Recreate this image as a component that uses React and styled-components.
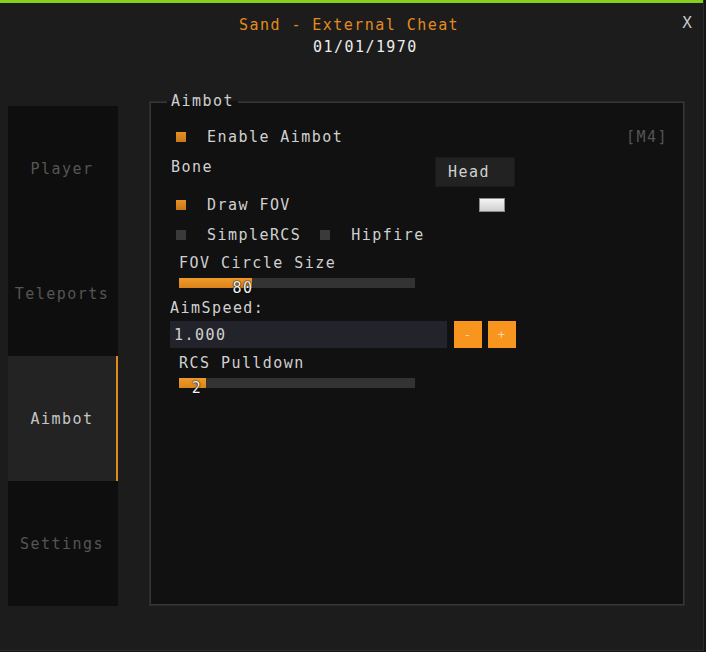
import React from 'react';
import styled, { createGlobalStyle } from 'styled-components';

const GlobalStyle = createGlobalStyle`
  html, body {
    margin: 0;
    padding: 0;
    background: #141414;
  }
  body {
    font-family: 'DejaVu Sans Mono', 'Liberation Mono', monospace;
  }
`;

const Window = styled.div`
  width: 703px;
  height: 650px;
  background: #1c1c1c;
  border-right: 1px solid #2c2c2c;
  border-bottom: 1px solid #2c2c2c;
  display: flex;
  flex-direction: column;
  font-size: 15px;
  letter-spacing: 1.45px;
  color: #d0d0d0;
`;

const TopLine = styled.div`
  height: 3px;
  background: #84d01c;
`;

const Header = styled.div`
  height: 98px;
  display: flex;
  position: relative;
`;

const Titles = styled.div`
  display: flex;
  flex-direction: column;
  padding-top: 11px;
`;

const Title = styled.div`
  color: ${(p) => p.color};
  margin-left: ${(p) => p.left}px;
  line-height: 22px;
  white-space: nowrap;
`;

const Close = styled.div`
  position: absolute;
  right: 11px;
  top: 9px;
  color: #c8c8c8;
  font-size: 16px;
  letter-spacing: 0;
  line-height: 22px;
`;

const Body = styled.div`
  display: flex;
  padding-left: 8px;
  gap: 31px;
  flex: 1;
`;

const Sidebar = styled.div`
  width: 110px;
  height: 500px;
  margin-top: 5px;
  background: #0e0e0e;
  display: flex;
  flex-direction: column;
`;

const Tab = styled.div`
  height: 125px;
  display: flex;
  align-items: center;
  justify-content: center;
  box-sizing: border-box;
  background: ${(p) => (p.active ? '#232323' : 'transparent')};
  border-right: 2px solid ${(p) => (p.active ? '#e08a1c' : 'transparent')};
  color: ${(p) => (p.active ? '#c6c6c6' : '#555555')};
`;

const Panel = styled.div`
  position: relative;
  width: 536px;
  height: 505px;
  background: #111111;
  border: 1px solid #2a2a2a;
  box-shadow: inset 0 0 0 1px #363636;
  display: flex;
  flex-direction: column;
  padding-top: 25px;
  box-sizing: border-box;
`;

const Legend = styled.div`
  position: absolute;
  top: -11px;
  left: 17px;
  padding: 0 4px;
  line-height: 20px;
  color: #cfcfcf;
  background: linear-gradient(to bottom, #1c1c1c 50%, #111111 50%);
`;

const Row = styled.div`
  display: flex;
  align-items: ${(p) => p.align || 'center'};
  height: ${(p) => p.h}px;
  margin-top: ${(p) => p.mt || 0}px;
  padding-left: ${(p) => p.pl || 0}px;
  position: relative;
`;

const Check = styled.div`
  width: 10px;
  height: 10px;
  background: ${(p) => (p.on ? 'linear-gradient(#e69124, #c9761a)' : '#3a3a3a')};
  margin-right: 21px;
  flex-shrink: 0;
`;

const Label = styled.span`
  line-height: 20px;
  white-space: nowrap;
  margin-right: ${(p) => p.mr || 0}px;
`;

const Hotkey = styled.span`
  position: absolute;
  right: 16px;
  color: #555555;
  line-height: 20px;
`;

const Combo = styled.div`
  margin-left: auto;
  margin-right: 169px;
  width: 80px;
  height: 30px;
  background: #222222;
  box-sizing: border-box;
  border: 1px solid #1a1a1a;
  display: flex;
  align-items: center;
  padding-left: 12px;
`;

const Swatch = styled.div`
  margin-left: auto;
  margin-right: 179px;
  width: 26px;
  height: 14px;
  box-sizing: border-box;
  border: 1px solid #8a8a8a;
  background: linear-gradient(#f4f4f4, #cfcfcf);
`;

const Track = styled.div`
  position: relative;
  width: 236px;
  height: 10px;
  background: #333333;
`;

const Fill = styled.div`
  height: 100%;
  background: linear-gradient(#f19a2a, #d9841c);
`;

const SliderValue = styled.span`
  position: absolute;
  top: 0;
  transform: translateX(-50%);
  color: #f2f2f2;
  line-height: 20px;
  text-shadow: 0 0 2px #000, 0 0 1px #000;
`;

const Input = styled.div`
  width: 277px;
  height: 27px;
  background: #23232b;
  display: flex;
  align-items: center;
  padding-left: 4px;
  box-sizing: border-box;
`;

const StepButton = styled.div`
  width: 28px;
  height: 27px;
  background: #f7951e;
  color: #fbd6a3;
  font-size: 12px;
  display: flex;
  align-items: center;
  justify-content: center;
  margin-left: ${(p) => p.ml}px;
`;

function Slider({ fill, text }) {
  return (
    <Track>
      <Fill style={{ width: fill }} />
      <SliderValue style={{ left: fill - 9 }}>{text}</SliderValue>
    </Track>
  );
}

export default function App() {
  const tabs = ['Player', 'Teleports', 'Aimbot', 'Settings'];
  return (
    <>
      <GlobalStyle />
      <Window>
        <TopLine />
        <Header>
          <Titles>
            <Title color="#e38b1f" left={239}>Sand - External Cheat</Title>
            <Title color="#ececec" left={313}>01/01/1970</Title>
          </Titles>
          <Close>X</Close>
        </Header>
        <Body>
          <Sidebar>
            {tabs.map((t) => (
              <Tab key={t} active={t === 'Aimbot'}>
                {t}
              </Tab>
            ))}
          </Sidebar>
          <Panel>
            <Legend>Aimbot</Legend>
            <Row h={20} pl={26}>
              <Check on />
              <Label>Enable Aimbot</Label>
              <Hotkey>[M4]</Hotkey>
            </Row>
            <Row h={30} mt={10} pl={21} align="flex-start">
              <Label>Bone</Label>
              <Combo>Head</Combo>
            </Row>
            <Row h={20} mt={8} pl={26}>
              <Check on />
              <Label>Draw FOV</Label>
              <Swatch />
            </Row>
            <Row h={20} mt={10} pl={26}>
              <Check />
              <Label mr={19}>SimpleRCS</Label>
              <Check />
              <Label>Hipfire</Label>
            </Row>
            <Row h={20} mt={8} pl={29}>
              <Label>FOV Circle Size</Label>
            </Row>
            <Row h={10} mt={5} pl={29}>
              <Slider fill={73} text="80" />
            </Row>
            <Row h={20} mt={10} pl={20}>
              <Label>AimSpeed:</Label>
            </Row>
            <Row h={27} mt={3} pl={20}>
              <Input>1.000</Input>
              <StepButton ml={7}>-</StepButton>
              <StepButton ml={6}>+</StepButton>
            </Row>
            <Row h={20} mt={5} pl={29}>
              <Label>RCS Pulldown</Label>
            </Row>
            <Row h={10} mt={5} pl={29}>
              <Slider fill={27} text="2" />
            </Row>
          </Panel>
        </Body>
      </Window>
    </>
  );
}
